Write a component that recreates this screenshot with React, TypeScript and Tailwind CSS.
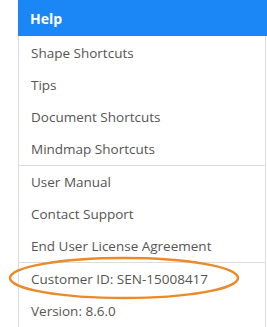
import React from "react";

const groups = [
  ["Shape Shortcuts", "Tips", "Document Shortcuts", "Mindmap Shortcuts"],
  ["User Manual", "Contact Support", "End User License Agreement"],
  ["Customer ID: SEN-15008417", "Version: 8.6.0"],
];

export default function App() {
  return (
    <div className="relative w-[267px] h-[327px] bg-white overflow-hidden" style={{ fontFamily: "'Open Sans', sans-serif" }}>
      <div className="ml-[18px] w-[249px] flex flex-col">
        <div className="h-[36px] bg-[#1b87f6] flex items-center pl-[12px] text-white font-bold text-[14px]">Help</div>
        <div className="w-[248px] border-l border-r border-b border-[#dcdcdc] flex flex-col">
          {groups.map((g, gi) => (
            <div key={gi} className={gi > 0 ? "border-t border-[#dcdcdc] flex flex-col" : "flex flex-col pt-[1px]"}>
              {g.map((t) => (
                <div key={t} className="h-[32px] flex items-center pl-[12px] pt-[1px] text-[13.5px] text-[#555]">{t}</div>
              ))}
            </div>
          ))}
        </div>
      </div>
      <svg className="absolute left-0 top-0 pointer-events-none" width="267" height="327">
        <ellipse cx="124" cy="278" rx="114" ry="20" fill="none" stroke="#ea8a2b" strokeWidth="2.5" />
      </svg>
    </div>
  );
}
